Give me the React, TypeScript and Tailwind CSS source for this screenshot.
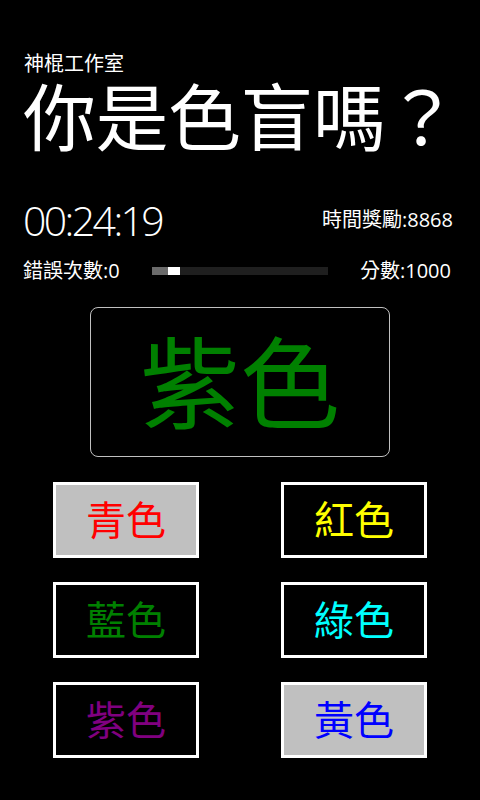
import React from 'react';

interface ChoiceItem {
  label: string;
  color: string;
  bg: string;
}

const choices: ChoiceItem[] = [
  { label: '青色', color: 'text-[#ff0000]', bg: 'bg-[#c0c0c0]' },
  { label: '紅色', color: 'text-[#ffff00]', bg: 'bg-black' },
  { label: '藍色', color: 'text-[#008000]', bg: 'bg-black' },
  { label: '綠色', color: 'text-[#00ffff]', bg: 'bg-black' },
  { label: '紫色', color: 'text-[#800080]', bg: 'bg-black' },
  { label: '黃色', color: 'text-[#0000ff]', bg: 'bg-[#c0c0c0]' },
];

const font = "font-['Open_Sans','Noto_Sans_CJK_TC',sans-serif]";

const App: React.FC = () => {
  return (
    <div className={`w-[480px] h-[800px] bg-black text-white overflow-hidden ${font}`}>
      <div className="px-[23px] pt-[52px]">
        <div className="text-[20px] leading-[24px] pl-[1px]">神棍工作室</div>
        <div className="text-[73px] leading-[82px] tracking-[-0.5px] whitespace-nowrap">你是色盲嗎？</div>

        <div className="flex items-center justify-between mt-[39px] h-[46px]">
          <span className="text-[41px] font-light leading-[46px] tracking-[-2.6px]">00:24:19</span>
          <span className="text-[20px] leading-[24px] pr-[4px]">時間獎勵:8868</span>
        </div>

        <div className="flex items-center mt-[14px] h-[28px]">
          <span className="w-[129px] text-[20px] leading-[24px]">錯誤次數:0</span>
          <div className="flex h-[8px] w-[176px] bg-[#1f1f1f]">
            <div className="w-[16px] bg-[#6b6b6b]" />
            <div className="w-[12px] bg-white" />
          </div>
          <span className="flex-1 text-right text-[20px] leading-[24px] pr-[6px]">分數:1000</span>
        </div>
      </div>

      <div className="flex justify-center mt-[22px]">
        <div className="w-[300px] h-[150px] border-[1.5px] border-[#c0c0c0] rounded-[8px] flex items-center justify-center">
          <span className="text-[100px] leading-[100px] text-[#008000]">紫色</span>
        </div>
      </div>

      <div className="grid grid-cols-[146px_146px] gap-x-[82px] gap-y-[24px] justify-center mt-[25px]">
        {choices.map((c) => (
          <button
            key={c.label}
            className={`h-[76px] border-[3px] border-white flex items-center justify-center ${c.bg}`}
          >
            <span className={`text-[40px] leading-[44px] ${c.color}`}>{c.label}</span>
          </button>
        ))}
      </div>
    </div>
  );
};

export default App;
